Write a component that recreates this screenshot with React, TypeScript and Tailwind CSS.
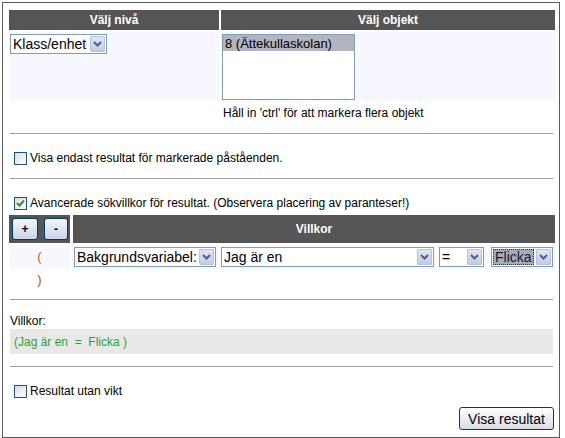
import React from "react";

function Chevron() {
  return (
    <svg width="9" height="6" viewBox="0 0 9 6" className="block">
      <path d="M1 1 L4.5 4.5 L8 1" fill="none" stroke="#4d6185" strokeWidth="2" />
    </svg>
  );
}

function Sel({ cls, text, hl }: { cls: string; text: string; hl?: boolean }) {
  return (
    <div className={`flex h-[20px] items-stretch border border-[#7f9db9] bg-white ${cls}`}>
      <div className="flex min-w-0 flex-1 items-center overflow-hidden pl-[1px] pr-[1px]">
        {hl ? (
          <span className="flex h-[16px] flex-1 items-center border border-dotted border-[#333] bg-[#a8acb8] pl-[1px] text-[14px] leading-none text-[#1a1a2a]">
            {text}
          </span>
        ) : (
          <span className="whitespace-nowrap pl-[1px] text-[14px] leading-none text-black">{text}</span>
        )}
      </div>
      <div className="m-[1px] flex w-[15px] items-center justify-center rounded-[1px] border border-[#b3c3e6] bg-gradient-to-b from-[#dfe6f5] to-[#c1cde6]">
        <Chevron />
      </div>
    </div>
  );
}

function Check({ checked }: { checked?: boolean }) {
  return (
    <div className="relative flex h-[13px] w-[13px] shrink-0 items-center justify-center border border-[#1c5180] bg-gradient-to-br from-[#dcdcd7] to-white">
      {checked && (
        <svg width="9" height="9" viewBox="0 0 9 9" className="block">
          <path d="M1 4 L3.5 6.5 L8 1.5" fill="none" stroke="#21a121" strokeWidth="2" />
        </svg>
      )}
    </div>
  );
}

function Hr() {
  return <div className="ml-[1px] mr-[2px] h-[1px] bg-[#a0a0a0]" />;
}

function SmallBtn({ label, cls }: { label: string; cls: string }) {
  return (
    <div
      className={`flex h-[22px] items-center justify-center rounded-[3px] border border-[#003c74] bg-gradient-to-b from-[#f4f7fc] to-[#c9d4e6] text-[12px] font-bold leading-none text-black ${cls}`}
    >
      {label}
    </div>
  );
}

export default function App() {
  return (
    <div className="h-[438px] w-[565px] bg-white pl-[2px] pt-[2px] font-['Liberation_Sans',Arial,sans-serif] text-[12px] text-black">
      <div className="flex h-[436px] w-[558px] flex-col border border-[#5a5a5a] pl-[6px] pr-[4px] pt-[7px]">
        {/* Table 1 */}
        <div className="flex h-[20px] gap-[2px]">
          <div className="flex w-[210px] items-center justify-center bg-[#555555] text-[12px] font-bold text-white">
            Välj nivå
          </div>
          <div className="flex flex-1 items-center justify-center bg-[#555555] text-[12px] font-bold text-white">
            Välj objekt
          </div>
        </div>
        <div className="mt-[2px] flex h-[69px] gap-[2px]">
          <div className="w-[210px] bg-[#f7f8ff] pl-[1px] pt-[2px]">
            <Sel cls="w-[97px] h-[19px]" text="Klass/enhet" />
          </div>
          <div className="flex-1 bg-[#f7f8ff] pl-[1px] pt-[2px]">
            <div className="h-[66px] w-[133px] border border-[#7f9db9] bg-white">
              <div className="flex h-[16px] items-center bg-[#b2b4bf] pl-[2px] text-[13px] leading-none text-black">
                8 (Ättekullaskolan)
              </div>
            </div>
          </div>
        </div>
        <div className="flex h-[24px] items-center">
          <div className="w-[214px]" />
          <span>Håll in 'ctrl' för att markera flera objekt</span>
        </div>

        <div className="mt-[8px]">
          <Hr />
        </div>

        <div className="mt-[14px] flex h-[20px] items-center gap-[3px] pl-[5px]">
          <Check />
          <span>Visa endast resultat för markerade påståenden.</span>
        </div>

        <div className="mt-[10px]">
          <Hr />
        </div>

        <div className="mt-[14px] flex h-[20px] items-center gap-[3px] pl-[5px]">
          <Check checked />
          <span>Avancerade sökvillkor för resultat. (Observera placering av paranteser!)</span>
        </div>

        {/* Villkor table */}
        <div className="mt-[2px] flex h-[28px] gap-[3px]">
          <div className="flex w-[61px] items-center gap-[6px] bg-[#555555] pl-[3px]">
            <SmallBtn label="+" cls="w-[26px]" />
            <SmallBtn label="-" cls="w-[24px]" />
          </div>
          <div className="flex flex-1 items-center justify-center bg-[#555555] text-[12px] font-bold text-white">
            Villkor
          </div>
        </div>
        <div className="mt-[2px] flex h-[24px] gap-[2px]">
          <div className="flex w-[61px] items-center justify-center bg-[#f7f8ff] text-[13px] text-[#b85c1e]">(</div>
          <div className="flex w-[147px] items-center bg-[#f7f8ff] pl-[2px]">
            <Sel cls="w-[142px]" text="Bakgrundsvariabel:" />
          </div>
          <div className="flex w-[215px] items-center bg-[#f7f8ff] pl-[0px]">
            <Sel cls="w-[213px]" text="Jag är en" />
          </div>
          <div className="flex w-[50px] items-center bg-[#f7f8ff] pl-[1px]">
            <Sel cls="w-[45px]" text="=" />
          </div>
          <div className="flex flex-1 items-center bg-[#f7f8ff] pl-[1px]">
            <Sel cls="w-[62px]" text="Flicka" hl />
          </div>
        </div>
        <div className="flex h-[22px] items-center">
          <div className="flex w-[61px] items-center justify-center text-[13px] text-[#b0482a]">)</div>
        </div>

        <div className="mt-[8px]">
          <Hr />
        </div>

        <div className="mt-[14px] flex h-[14px] items-center pl-[1px] leading-none">Villkor:</div>
        <div className="mr-[2px] ml-[1px] mt-[1px] flex h-[25px] items-center bg-[#e8e8e8] pl-[4px] text-[#2aa52a]">
          (Jag är en&nbsp; = &nbsp;Flicka )
        </div>

        <div className="mt-[12px]">
          <Hr />
        </div>

        <div className="mt-[14px] flex h-[20px] items-center gap-[3px] pl-[5px]">
          <Check />
          <span>Resultat utan vikt</span>
        </div>

        <div className="mt-[6px] flex justify-end pr-[1px]">
          <div className="flex h-[23px] w-[95px] items-center justify-center rounded-[3px] border border-[#003c74] bg-gradient-to-b from-white to-[#dcdce4] text-[14px] leading-none text-black">
            Visa resultat
          </div>
        </div>
      </div>
    </div>
  );
}
